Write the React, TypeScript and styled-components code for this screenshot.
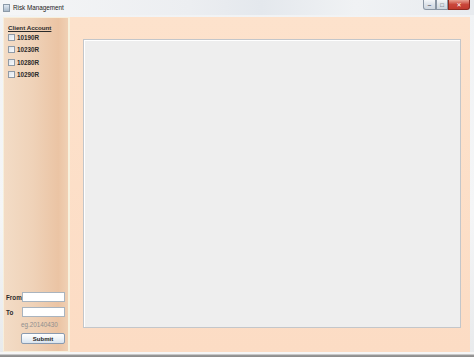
import React from "react";
import styled, { createGlobalStyle } from "styled-components";

const GlobalStyle = createGlobalStyle`
  html, body {
    margin: 0;
    padding: 0;
    background: #e9edf1;
  }
`;

const Window = styled.div`
  width: 474px;
  height: 357px;
  display: flex;
  flex-direction: column;
  background: linear-gradient(180deg, #f1f3f5 0%, #f5f6f7 60%, #e8eaec 100%);
  font-family: "Liberation Sans", "DejaVu Sans", sans-serif;
  overflow: hidden;
`;

const TitleBar = styled.div`
  height: 15px;
  display: flex;
  align-items: center;
  padding-left: 3px;
  background: linear-gradient(90deg, #f5f6f7 0%, #eceef1 40%, #e4e8ed 55%, #f0f2f4 75%, #e8ebef 100%);
`;

const AppIcon = styled.div`
  width: 7px;
  height: 8px;
  border: 1px solid #8c9aa8;
  background: linear-gradient(180deg, #dfe8f2, #a9b9c9);
  box-sizing: border-box;
  margin-right: 3px;
`;

const Title = styled.span`
  font-size: 6.3px;
  color: #202020;
  flex: 1;
`;

const Controls = styled.div`
  display: flex;
  align-self: flex-start;
  margin-right: 4px;
`;

const CtrlButton = styled.div<{ $close?: boolean; $w: number }>`
  width: ${(p) => p.$w}px;
  height: 10px;
  box-sizing: border-box;
  border: 1px solid ${(p) => (p.$close ? "#8e2a20" : "#8a96a4")};
  border-top: none;
  background: ${(p) =>
    p.$close
      ? "linear-gradient(180deg, #e8a090 0%, #c9463a 50%, #c23a2e 100%)"
      : "linear-gradient(180deg, #f4f6f8 0%, #dde3ea 50%, #cfd7e0 100%)"};
  display: flex;
  align-items: center;
  justify-content: center;
  color: ${(p) => (p.$close ? "#fff" : "#3a4450")};
  font-size: 6px;
  font-weight: bold;
  line-height: 1;
  &:first-child {
    border-bottom-left-radius: 3px;
  }
  &:last-child {
    border-bottom-right-radius: 3px;
  }
`;

const Body = styled.div`
  flex: 1;
  display: flex;
  padding: 2px 4px 0 3px;
`;

const Sidebar = styled.div`
  width: 67px;
  flex-shrink: 0;
  display: flex;
  flex-direction: column;
  justify-content: space-between;
  box-sizing: border-box;
  border: 1px solid #f7efdc;
  border-right: 2px solid #f8f1dc;
  background: linear-gradient(90deg, #f3dcc6 0%, #efd2b8 45%, #ebc4a4 85%, #f0d0b4 100%);
  padding: 6px 0 7px 2px;
`;

const AccountBlock = styled.div`
  padding-left: 2px;
`;

const AccountHeading = styled.div`
  font-size: 6.2px;
  font-weight: bold;
  color: #2a2a2a;
  text-decoration: underline;
  margin: 0 0 2px 0;
`;

const AccountList = styled.div`
  display: flex;
  flex-direction: column;
  gap: 3.4px;
`;

const AccountRow = styled.label`
  display: flex;
  align-items: center;
  gap: 2px;
  height: 9px;
  font-size: 6.3px;
  font-weight: bold;
  color: #2a2a2a;
`;

const Box = styled.span`
  width: 7px;
  height: 7px;
  box-sizing: border-box;
  border: 1px solid #8f9aa6;
  background: linear-gradient(135deg, #dfe5ec, #f7f9fb);
`;

const DateForm = styled.div`
  display: flex;
  flex-direction: column;
  gap: 5px;
`;

const FieldRow = styled.div`
  display: flex;
  align-items: center;
`;

const FieldLabel = styled.span`
  width: 16px;
  flex-shrink: 0;
  font-size: 6.3px;
  font-weight: bold;
  color: #2a2a2a;
`;

const Input = styled.div`
  width: 43px;
  height: 10px;
  flex-shrink: 0;
  box-sizing: border-box;
  border: 1px solid #a9b4bf;
  background: #fff;
`;

const Hint = styled.div`
  font-size: 6.3px;
  line-height: 7px;
  color: #8f8f8f;
  margin-left: 15px;
  margin-top: -1px;
`;

const SubmitButton = styled.div`
  width: 44px;
  height: 11px;
  margin-left: 15px;
  box-sizing: border-box;
  border: 1px solid #8a9bb0;
  border-radius: 2px;
  background: linear-gradient(180deg, #ffffff 0%, #eef3f8 50%, #d9e4ef 100%);
  font-size: 6px;
  font-weight: bold;
  color: #222;
  display: flex;
  align-items: center;
  justify-content: center;
`;

const Main = styled.div`
  flex: 1;
  display: flex;
  background: linear-gradient(180deg, #fde2cc 0%, #fcdcc4 100%);
  padding: 22px 9px 24px 13px;
`;

const Canvas = styled.div`
  flex: 1;
  box-sizing: border-box;
  background: #eeeeee;
  border: 1px solid #c3c6ca;
  box-shadow: inset 1px 1px 0 #ffffff;
`;

const BottomFrame = styled.div`
  height: 5px;
  background: linear-gradient(180deg, #f6f6f6 0%, #f6f6f6 40%, #9a9a9a 60%, #8a8a8a 100%);
`;

const accounts = ["10190R", "10230R", "10280R", "10290R"];

export default function App() {
  return (
    <>
      <GlobalStyle />
      <Window>
        <TitleBar>
          <AppIcon />
          <Title>Risk Management</Title>
          <Controls>
            <CtrlButton $w={13}>‒</CtrlButton>
            <CtrlButton $w={12}>□</CtrlButton>
            <CtrlButton $w={22} $close>
              ✕
            </CtrlButton>
          </Controls>
        </TitleBar>
        <Body>
          <Sidebar>
            <AccountBlock>
              <AccountHeading>Client Account</AccountHeading>
              <AccountList>
                {accounts.map((a) => (
                  <AccountRow key={a}>
                    <Box />
                    {a}
                  </AccountRow>
                ))}
              </AccountList>
            </AccountBlock>
            <DateForm>
              <FieldRow>
                <FieldLabel>From</FieldLabel>
                <Input />
              </FieldRow>
              <FieldRow>
                <FieldLabel>To</FieldLabel>
                <Input />
              </FieldRow>
              <Hint>eg.20140430</Hint>
              <SubmitButton>Submit</SubmitButton>
            </DateForm>
          </Sidebar>
          <Main>
            <Canvas />
          </Main>
        </Body>
        <BottomFrame />
      </Window>
    </>
  );
}
